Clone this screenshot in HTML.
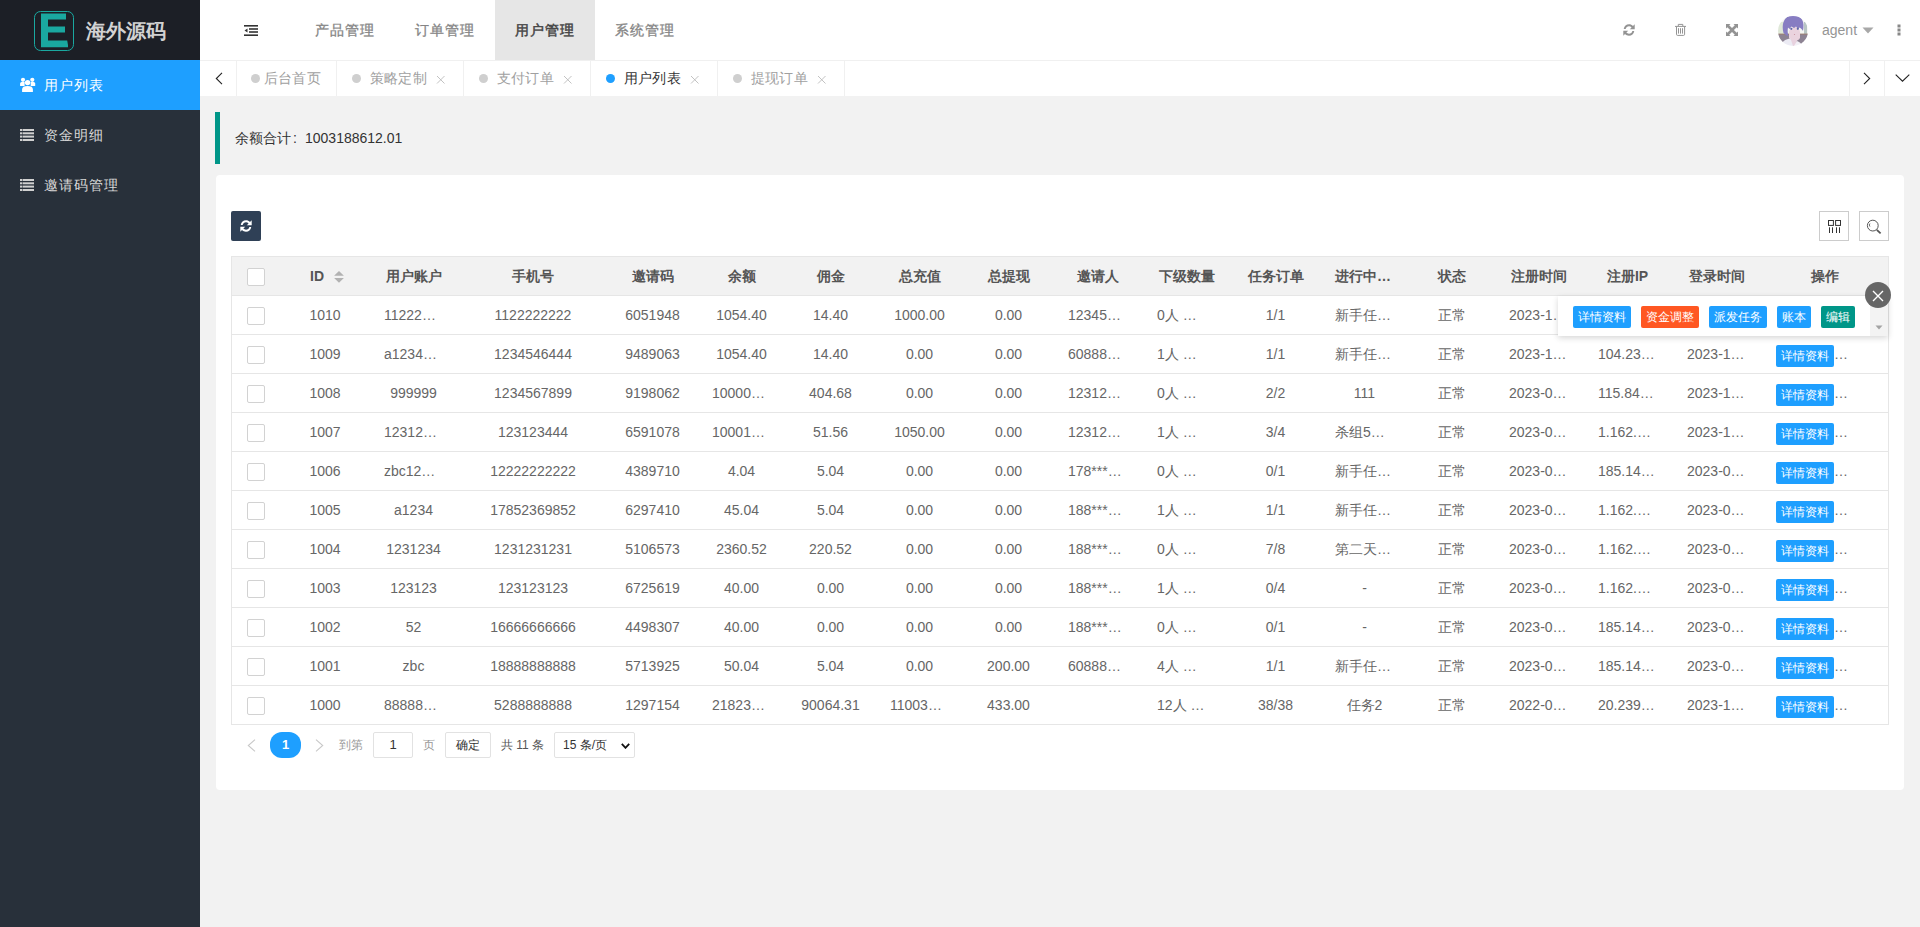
<!DOCTYPE html>
<html><head><meta charset="utf-8">
<style>
*{margin:0;padding:0;box-sizing:border-box}
html,body{width:1920px;height:927px;overflow:hidden;background:#f2f2f2;font-family:"Liberation Sans",sans-serif;font-size:14px;color:#666}
.abs{position:absolute}
#side{position:absolute;left:0;top:0;width:200px;height:927px;background:#28303a}
#logo{position:absolute;left:0;top:0;width:200px;height:60px;background:#1c1f26}
#logo .t{position:absolute;left:86px;top:18px;font-size:20px;font-weight:bold;color:#d2d2d2;line-height:26px;letter-spacing:0px}
.mi{position:absolute;left:0;width:200px;height:50px;line-height:50px;color:#d8d8d8;font-size:14px}
.mi .tx{position:absolute;left:44px;top:0;letter-spacing:1px}
.mi.on{background:#1e9fff;color:#fff}
#head{position:absolute;left:200px;top:0;width:1720px;height:60px;background:#fff}
.nav{position:absolute;top:0;height:60px;line-height:60px;width:100px;text-align:center;color:#858585;font-size:14px;letter-spacing:1px;-webkit-text-stroke:0.3px #858585}
.nav.on{background:#e6e6e6;color:#444;-webkit-text-stroke:0.45px #444}
#tabs{position:absolute;left:200px;top:60px;width:1720px;height:36px;background:#fff;border-top:1px solid #f0f0f0}
.tab{position:absolute;top:0;height:35px;line-height:34px;border-right:1px solid #f0f0f0;color:#a0a0a0;font-size:14px;letter-spacing:0.2px}
.tab .dot{position:absolute;top:13px;width:9px;height:9px;border-radius:50%;background:#cfcfcf}
.tab .x{position:absolute;top:0;font-size:14px;color:#b0b0b0}
#notice{position:absolute;left:215px;top:112px;width:1689px;height:52px;border-left:5px solid #009688;background:#f2f2f2}
#card{position:absolute;left:216px;top:175px;width:1688px;height:615px;background:#fff;border-radius:4px}
#tbl{position:absolute;left:231px;top:256px;width:1658px;height:469px;border:1px solid #e6e6e6;border-bottom:0}
.hrow{position:absolute;left:0;top:0;width:1656px;height:39px;background:#f2f2f2;border-bottom:1px solid #e6e6e6}
.rline{position:absolute;left:0;width:1656px;height:1px;background:#e6e6e6}
.c{position:absolute;height:38px;line-height:38px;padding:0 15px;text-align:center;white-space:nowrap;overflow:hidden;color:#666}
.c.l{text-align:left}
.c.h{color:#555;font-weight:bold}
.cb{position:absolute;width:18px;height:18px;border:1px solid #d2d2d2;border-radius:2px;background:#fff}
.btn{display:inline-block;vertical-align:top;margin-top:10px;height:22px;line-height:22px;padding:0 5px;font-size:12px;color:#fff;background:#1e9fff;border-radius:2px}
.ell{color:#666}
.tb{position:absolute;top:10px;width:58px;height:22px;line-height:22px;text-align:center;font-size:12px;color:#fff;background:#1e9fff;border-radius:2px}
</style></head><body>
<div id="side">
  <div id="logo">
    <svg class="abs" style="left:34px;top:11px" width="40" height="40" viewBox="0 0 40 40">
      <rect x="0.5" y="0.5" width="39" height="39" rx="6" fill="none" stroke="#1aa8a0" stroke-width="1"/>
      <path d="M7 2.5H32V8.5H14V15.5H31V21.5H14V29.5H33.2L34 34V36.2H7Z" fill="#1aa8a0"/>
    </svg>
    <div class="t">海外源码</div>
  </div>
  <div class="mi on" style="top:60px">
    <svg class="abs" style="left:20px;top:17px" width="16" height="16" viewBox="0 0 16 16"><g fill="#fff"><circle cx="3" cy="2.8" r="2.1"/><circle cx="12.3" cy="2.8" r="2.1"/><circle cx="7.6" cy="5.6" r="2.7"/><path d="M0.1 8.9V6.6Q0.1 5.1 1.6 5.1H4.6V8.9Z"/><path d="M15.2 8.9V6.6Q15.2 5.1 13.7 5.1H10.7V8.9Z"/><path d="M2.1 15V12.5Q2.1 9.1 7.5 9.1Q12.9 9.1 12.9 12.5V15Z"/></g></svg>
    <span class="tx">用户列表</span></div>
  <div class="mi" style="top:110px">
    <svg class="abs" style="left:20px;top:19px" width="14" height="12" viewBox="0 0 14 12"><g fill="#d0d0d0"><rect x="0" y="0" width="2" height="2"/><rect x="2.5" y="0" width="11.5" height="2"/><rect x="0" y="3.3" width="2" height="2"/><rect x="2.5" y="3.3" width="11.5" height="2"/><rect x="0" y="6.6" width="2" height="2"/><rect x="2.5" y="6.6" width="11.5" height="2"/><rect x="0" y="10" width="2" height="2"/><rect x="2.5" y="10" width="11.5" height="2"/></g></svg>
    <span class="tx">资金明细</span></div>
  <div class="mi" style="top:160px">
    <svg class="abs" style="left:20px;top:19px" width="14" height="12" viewBox="0 0 14 12"><g fill="#d0d0d0"><rect x="0" y="0" width="2" height="2"/><rect x="2.5" y="0" width="11.5" height="2"/><rect x="0" y="3.3" width="2" height="2"/><rect x="2.5" y="3.3" width="11.5" height="2"/><rect x="0" y="6.6" width="2" height="2"/><rect x="2.5" y="6.6" width="11.5" height="2"/><rect x="0" y="10" width="2" height="2"/><rect x="2.5" y="10" width="11.5" height="2"/></g></svg>
    <span class="tx">邀请码管理</span></div>
</div>

<div id="head">
  <svg class="abs" style="left:44px;top:25px" width="14" height="11" viewBox="0 0 14 11"><g fill="#333"><rect x="0" y="0" width="14" height="1.6"/><rect x="5" y="3.2" width="9" height="1.6"/><rect x="5" y="6.2" width="9" height="1.6"/><rect x="0" y="9.4" width="14" height="1.6"/><path d="M0.5 5.5L3.5 3.5V7.5Z"/></g></svg>
  <div class="nav" style="left:95px">产品管理</div>
  <div class="nav" style="left:195px">订单管理</div>
  <div class="nav on" style="left:295px">用户管理</div>
  <div class="nav" style="left:395px">系统管理</div>
  <svg class="abs" style="left:1422px;top:23px" width="14" height="14" viewBox="0 0 13 13"><g fill="#939393"><path d="M1.6 5.6C2 3 4 1.2 6.5 1.2C8 1.2 9.3 1.8 10.2 2.8L11.8 1.2V5.8H7.2L8.9 4.1C8.3 3.4 7.4 3 6.5 3C5 3 3.7 4 3.4 5.6Z"/><path d="M11.4 7.4C11 10 9 11.8 6.5 11.8C5 11.8 3.7 11.2 2.8 10.2L1.2 11.8V7.2H5.8L4.1 8.9C4.7 9.6 5.6 10 6.5 10C8 10 9.3 9 9.6 7.4Z"/></g></svg>
  <svg class="abs" style="left:1470px;top:18px" width="22" height="22" viewBox="0 0 22 22"><g fill="none" stroke="#949494" stroke-width="1"><path d="M5 8.4H16"/><path d="M8.3 8.2V6.4H12.8V8.2"/><path d="M6.5 8.6V16.3Q6.5 17.4 7.6 17.4H13.5Q14.6 17.4 14.6 16.3V8.6"/><path d="M8.5 10.2V15.6M10.5 10.2V15.6M12.5 10.2V15.6"/></g></svg>
  <svg class="abs" style="left:1526px;top:24px" width="12" height="12" viewBox="0 0 12 12"><g fill="#939393"><path d="M0 0H4.5L3.2 1.3L6 4.1L8.8 1.3L7.5 0H12V4.5L10.7 3.2L7.9 6L10.7 8.8L12 7.5V12H7.5L8.8 10.7L6 7.9L3.2 10.7L4.5 12H0V7.5L1.3 8.8L4.1 6L1.3 3.2L0 4.5Z"/></g></svg>
  <svg class="abs" style="left:1578px;top:16px" width="30" height="30" viewBox="0 0 30 30"><defs><clipPath id="av"><circle cx="15" cy="15" r="15"/></clipPath><filter id="bl"><feGaussianBlur stdDeviation="0.5"/></filter></defs><g clip-path="url(#av)"><g filter="url(#bl)"><rect width="30" height="30" fill="#f4f6f2"/><rect x="0" y="6" width="8" height="12" fill="#dfe8d8"/><rect x="26" y="6" width="3" height="14" fill="#b9c6c4"/><rect y="18" width="30" height="12" fill="#8d8393"/><rect y="17.6" width="30" height="1" fill="#9c7f72"/><path d="M11 17C11 13 13 11 16.5 11S22 13 22 17V22C21 24 19 25 16.5 25C14 25 12 23.5 11 22Z" fill="#ead3de"/><path d="M13 24H19L18.5 30H13Z" fill="#e8d2df"/><path d="M3 30C4 25 8 23 12.5 22.5L15 30Z" fill="#ecebf4"/><path d="M16 30L19 25C22 26 24 28 24 30Z" fill="#f2f0f6"/><path d="M5.5 17C3.5 9 5 0 15 -1C24 -1 27 6 25 15C24 13 22.5 12 21.5 11.5L20 13L18 10.5L16 12L13.5 10.5L11.5 13L10 11.5C9.5 14 9.5 17 10.5 20C8.5 19.5 7 18.5 5.5 17Z" fill="#877dc2"/><circle cx="13.3" cy="12.8" r="1.1" fill="#5f6aa8"/><circle cx="19.8" cy="12.8" r="1.1" fill="#5f6aa8"/><circle cx="16.5" cy="18.5" r="0.6" fill="#c9909c"/></g></g></svg>
  <span class="abs" style="left:1622px;top:21px;color:#959595;font-size:14px;line-height:18px">agent</span>
  <svg class="abs" style="left:1662px;top:27px" width="12" height="7" viewBox="0 0 12 7"><path d="M0.5 0.5H11.5L6 6.5Z" fill="#a8a8a8"/></svg>
  <svg class="abs" style="left:1697px;top:24px" width="4" height="12" viewBox="0 0 4 12"><g fill="#888"><rect x="0.5" y="0.5" width="3" height="3"/><rect x="0.5" y="4.5" width="3" height="3"/><rect x="0.5" y="8.5" width="3" height="3"/></g></svg>
</div>

<div id="tabs">
  <div class="tab" style="left:0;width:37px"><svg class="abs" style="left:14.5px;top:10.8px" width="8" height="13" viewBox="0 0 8 13"><path d="M7 0.9L1.3 6.5L7 12.1" fill="none" stroke="#222" stroke-width="1.1"/></svg></div>
  <div class="tab" style="left:37px;width:100px"><span class="dot" style="left:14px"></span><span class="abs" style="left:27px">后台首页</span></div>
  <div class="tab" style="left:137px;width:127px"><span class="dot" style="left:15px"></span><span class="abs" style="left:33px">策略定制</span><span class="x" style="left:99px"><svg width="9" height="9" viewBox="0 0 9 9" style="position:absolute;top:14px;left:0"><path d="M1 1L8.5 8.5M8.5 1L1 8.5" stroke="#bbb" stroke-width="0.9"/></svg></span></div>
  <div class="tab" style="left:264px;width:127px"><span class="dot" style="left:15px"></span><span class="abs" style="left:33px">支付订单</span><span class="x" style="left:99px"><svg width="9" height="9" viewBox="0 0 9 9" style="position:absolute;top:14px;left:0"><path d="M1 1L8.5 8.5M8.5 1L1 8.5" stroke="#bbb" stroke-width="0.9"/></svg></span></div>
  <div class="tab" style="left:391px;width:127px"><span class="dot" style="left:15px;background:#1e9fff"></span><span class="abs" style="left:33px;color:#333">用户列表</span><span class="x" style="left:99px"><svg width="9" height="9" viewBox="0 0 9 9" style="position:absolute;top:14px;left:0"><path d="M1 1L8.5 8.5M8.5 1L1 8.5" stroke="#bbb" stroke-width="0.9"/></svg></span></div>
  <div class="tab" style="left:518px;width:127px"><span class="dot" style="left:15px"></span><span class="abs" style="left:33px">提现订单</span><span class="x" style="left:99px"><svg width="9" height="9" viewBox="0 0 9 9" style="position:absolute;top:14px;left:0"><path d="M1 1L8.5 8.5M8.5 1L1 8.5" stroke="#bbb" stroke-width="0.9"/></svg></span></div>
  <div class="tab" style="left:1649px;width:36px;border-left:1px solid #f0f0f0"><svg class="abs" style="left:13px;top:11px" width="8" height="13" viewBox="0 0 8 13"><path d="M1 0.9L6.7 6.5L1 12.1" fill="none" stroke="#222" stroke-width="1.1"/></svg></div>
  <div class="tab" style="left:1685px;width:35px;border-right:0"><svg class="abs" style="left:10px;top:12.8px" width="15" height="8" viewBox="0 0 15 8"><path d="M0.7 0.7L7.5 7.2L14.3 0.7" fill="none" stroke="#222" stroke-width="1.1"/></svg></div>
</div>
<div id="notice"><span class="abs" style="left:15px;top:17px;color:#333;font-size:14px;line-height:18px">余额合计<span style="display:inline-block;width:14px;padding-left:2px">:</span>1003188612.01</span></div>
<div id="card"></div>
<div class="abs" style="left:231px;top:211px;width:30px;height:30px;background:#2f4056;border-radius:2px"><svg class="abs" style="left:8px;top:8px" width="14" height="14" viewBox="0 0 13 13"><g fill="#fff"><path d="M1.6 5.6C2 3 4 1.2 6.5 1.2C8 1.2 9.3 1.8 10.2 2.8L11.8 1.2V5.8H7.2L8.9 4.1C8.3 3.4 7.4 3 6.5 3C5 3 3.7 4 3.4 5.6Z"/><path d="M11.4 7.4C11 10 9 11.8 6.5 11.8C5 11.8 3.7 11.2 2.8 10.2L1.2 11.8V7.2H5.8L4.1 8.9C4.7 9.6 5.6 10 6.5 10C8 10 9.3 9 9.6 7.4Z"/></g></svg></div>
<div class="abs" style="left:1819px;top:211px;width:30px;height:30px;border:1px solid #ccc"></div>
<div class="abs" style="left:1859px;top:211px;width:30px;height:30px;border:1px solid #ccc"></div>
<div id="tbl">
<div class="hrow"></div>
<span class="cb" style="left:15px;top:11px"></span>
<span class="c h" style="left:49px;top:0;width:88px;text-align:left;padding-left:29px">ID<svg style="position:absolute;left:53px;top:13px" width="10" height="13" viewBox="0 0 10 13"><path d="M5 1L9.9 5.8H0.1Z M5 12.8L9.9 8.1H0.1Z" fill="#b2b2b2"/></svg></span>
<span class="c h" style="left:137px;top:0px;width:89px">用户账户</span>
<span class="c h" style="left:226px;top:0px;width:150px">手机号</span>
<span class="c h" style="left:376px;top:0px;width:89px">邀请码</span>
<span class="c h" style="left:465px;top:0px;width:89px">余额</span>
<span class="c h" style="left:554px;top:0px;width:89px">佣金</span>
<span class="c h" style="left:643px;top:0px;width:89px">总充值</span>
<span class="c h" style="left:732px;top:0px;width:89px">总提现</span>
<span class="c h" style="left:821px;top:0px;width:89px">邀请人</span>
<span class="c h" style="left:910px;top:0px;width:89px">下级数量</span>
<span class="c h" style="left:999px;top:0px;width:89px">任务订单</span>
<span class="c h l" style="left:1088px;top:0px;width:89px">进行中…</span>
<span class="c h" style="left:1177px;top:0px;width:85px">状态</span>
<span class="c h" style="left:1262px;top:0px;width:89px">注册时间</span>
<span class="c h" style="left:1351px;top:0px;width:89px">注册IP</span>
<span class="c h" style="left:1440px;top:0px;width:89px">登录时间</span>
<span class="c h" style="left:1529px;top:0px;width:128px">操作</span>
<div class="rline" style="top:77px"></div>
<span class="cb" style="left:15px;top:50px"></span>
<span class="c" style="left:49px;top:39px;width:88px">1010</span>
<span class="c l" style="left:137px;top:39px;width:89px">11222…</span>
<span class="c" style="left:226px;top:39px;width:150px">1122222222</span>
<span class="c" style="left:376px;top:39px;width:89px">6051948</span>
<span class="c" style="left:465px;top:39px;width:89px">1054.40</span>
<span class="c" style="left:554px;top:39px;width:89px">14.40</span>
<span class="c" style="left:643px;top:39px;width:89px">1000.00</span>
<span class="c" style="left:732px;top:39px;width:89px">0.00</span>
<span class="c l" style="left:821px;top:39px;width:89px">12345…</span>
<span class="c l" style="left:910px;top:39px;width:89px">0人 …</span>
<span class="c" style="left:999px;top:39px;width:89px">1/1</span>
<span class="c l" style="left:1088px;top:39px;width:89px">新手任…</span>
<span class="c" style="left:1177px;top:39px;width:85px">正常</span>
<span class="c l" style="left:1262px;top:39px;width:89px">2023-1…</span>
<div class="rline" style="top:116px"></div>
<span class="cb" style="left:15px;top:89px"></span>
<span class="c" style="left:49px;top:78px;width:88px">1009</span>
<span class="c l" style="left:137px;top:78px;width:89px">a1234…</span>
<span class="c" style="left:226px;top:78px;width:150px">1234546444</span>
<span class="c" style="left:376px;top:78px;width:89px">9489063</span>
<span class="c" style="left:465px;top:78px;width:89px">1054.40</span>
<span class="c" style="left:554px;top:78px;width:89px">14.40</span>
<span class="c" style="left:643px;top:78px;width:89px">0.00</span>
<span class="c" style="left:732px;top:78px;width:89px">0.00</span>
<span class="c l" style="left:821px;top:78px;width:89px">60888…</span>
<span class="c l" style="left:910px;top:78px;width:89px">1人 …</span>
<span class="c" style="left:999px;top:78px;width:89px">1/1</span>
<span class="c l" style="left:1088px;top:78px;width:89px">新手任…</span>
<span class="c" style="left:1177px;top:78px;width:85px">正常</span>
<span class="c l" style="left:1262px;top:78px;width:89px">2023-1…</span>
<span class="c l" style="left:1351px;top:78px;width:89px">104.23…</span>
<span class="c l" style="left:1440px;top:78px;width:89px">2023-1…</span>
<span class="c l" style="left:1529px;top:78px;width:128px"><span class="btn">详情资料</span><span class="ell">…</span></span>
<div class="rline" style="top:155px"></div>
<span class="cb" style="left:15px;top:128px"></span>
<span class="c" style="left:49px;top:117px;width:88px">1008</span>
<span class="c" style="left:137px;top:117px;width:89px">999999</span>
<span class="c" style="left:226px;top:117px;width:150px">1234567899</span>
<span class="c" style="left:376px;top:117px;width:89px">9198062</span>
<span class="c l" style="left:465px;top:117px;width:89px">10000…</span>
<span class="c" style="left:554px;top:117px;width:89px">404.68</span>
<span class="c" style="left:643px;top:117px;width:89px">0.00</span>
<span class="c" style="left:732px;top:117px;width:89px">0.00</span>
<span class="c l" style="left:821px;top:117px;width:89px">12312…</span>
<span class="c l" style="left:910px;top:117px;width:89px">0人 …</span>
<span class="c" style="left:999px;top:117px;width:89px">2/2</span>
<span class="c" style="left:1088px;top:117px;width:89px">111</span>
<span class="c" style="left:1177px;top:117px;width:85px">正常</span>
<span class="c l" style="left:1262px;top:117px;width:89px">2023-0…</span>
<span class="c l" style="left:1351px;top:117px;width:89px">115.84…</span>
<span class="c l" style="left:1440px;top:117px;width:89px">2023-1…</span>
<span class="c l" style="left:1529px;top:117px;width:128px"><span class="btn">详情资料</span><span class="ell">…</span></span>
<div class="rline" style="top:194px"></div>
<span class="cb" style="left:15px;top:167px"></span>
<span class="c" style="left:49px;top:156px;width:88px">1007</span>
<span class="c l" style="left:137px;top:156px;width:89px">12312…</span>
<span class="c" style="left:226px;top:156px;width:150px">123123444</span>
<span class="c" style="left:376px;top:156px;width:89px">6591078</span>
<span class="c l" style="left:465px;top:156px;width:89px">10001…</span>
<span class="c" style="left:554px;top:156px;width:89px">51.56</span>
<span class="c" style="left:643px;top:156px;width:89px">1050.00</span>
<span class="c" style="left:732px;top:156px;width:89px">0.00</span>
<span class="c l" style="left:821px;top:156px;width:89px">12312…</span>
<span class="c l" style="left:910px;top:156px;width:89px">1人 …</span>
<span class="c" style="left:999px;top:156px;width:89px">3/4</span>
<span class="c l" style="left:1088px;top:156px;width:89px">杀组5…</span>
<span class="c" style="left:1177px;top:156px;width:85px">正常</span>
<span class="c l" style="left:1262px;top:156px;width:89px">2023-0…</span>
<span class="c l" style="left:1351px;top:156px;width:89px">1.162.…</span>
<span class="c l" style="left:1440px;top:156px;width:89px">2023-1…</span>
<span class="c l" style="left:1529px;top:156px;width:128px"><span class="btn">详情资料</span><span class="ell">…</span></span>
<div class="rline" style="top:233px"></div>
<span class="cb" style="left:15px;top:206px"></span>
<span class="c" style="left:49px;top:195px;width:88px">1006</span>
<span class="c l" style="left:137px;top:195px;width:89px">zbc12…</span>
<span class="c" style="left:226px;top:195px;width:150px">12222222222</span>
<span class="c" style="left:376px;top:195px;width:89px">4389710</span>
<span class="c" style="left:465px;top:195px;width:89px">4.04</span>
<span class="c" style="left:554px;top:195px;width:89px">5.04</span>
<span class="c" style="left:643px;top:195px;width:89px">0.00</span>
<span class="c" style="left:732px;top:195px;width:89px">0.00</span>
<span class="c l" style="left:821px;top:195px;width:89px">178***…</span>
<span class="c l" style="left:910px;top:195px;width:89px">0人 …</span>
<span class="c" style="left:999px;top:195px;width:89px">0/1</span>
<span class="c l" style="left:1088px;top:195px;width:89px">新手任…</span>
<span class="c" style="left:1177px;top:195px;width:85px">正常</span>
<span class="c l" style="left:1262px;top:195px;width:89px">2023-0…</span>
<span class="c l" style="left:1351px;top:195px;width:89px">185.14…</span>
<span class="c l" style="left:1440px;top:195px;width:89px">2023-0…</span>
<span class="c l" style="left:1529px;top:195px;width:128px"><span class="btn">详情资料</span><span class="ell">…</span></span>
<div class="rline" style="top:272px"></div>
<span class="cb" style="left:15px;top:245px"></span>
<span class="c" style="left:49px;top:234px;width:88px">1005</span>
<span class="c" style="left:137px;top:234px;width:89px">a1234</span>
<span class="c" style="left:226px;top:234px;width:150px">17852369852</span>
<span class="c" style="left:376px;top:234px;width:89px">6297410</span>
<span class="c" style="left:465px;top:234px;width:89px">45.04</span>
<span class="c" style="left:554px;top:234px;width:89px">5.04</span>
<span class="c" style="left:643px;top:234px;width:89px">0.00</span>
<span class="c" style="left:732px;top:234px;width:89px">0.00</span>
<span class="c l" style="left:821px;top:234px;width:89px">188***…</span>
<span class="c l" style="left:910px;top:234px;width:89px">1人 …</span>
<span class="c" style="left:999px;top:234px;width:89px">1/1</span>
<span class="c l" style="left:1088px;top:234px;width:89px">新手任…</span>
<span class="c" style="left:1177px;top:234px;width:85px">正常</span>
<span class="c l" style="left:1262px;top:234px;width:89px">2023-0…</span>
<span class="c l" style="left:1351px;top:234px;width:89px">1.162.…</span>
<span class="c l" style="left:1440px;top:234px;width:89px">2023-0…</span>
<span class="c l" style="left:1529px;top:234px;width:128px"><span class="btn">详情资料</span><span class="ell">…</span></span>
<div class="rline" style="top:311px"></div>
<span class="cb" style="left:15px;top:284px"></span>
<span class="c" style="left:49px;top:273px;width:88px">1004</span>
<span class="c" style="left:137px;top:273px;width:89px">1231234</span>
<span class="c" style="left:226px;top:273px;width:150px">1231231231</span>
<span class="c" style="left:376px;top:273px;width:89px">5106573</span>
<span class="c" style="left:465px;top:273px;width:89px">2360.52</span>
<span class="c" style="left:554px;top:273px;width:89px">220.52</span>
<span class="c" style="left:643px;top:273px;width:89px">0.00</span>
<span class="c" style="left:732px;top:273px;width:89px">0.00</span>
<span class="c l" style="left:821px;top:273px;width:89px">188***…</span>
<span class="c l" style="left:910px;top:273px;width:89px">0人 …</span>
<span class="c" style="left:999px;top:273px;width:89px">7/8</span>
<span class="c l" style="left:1088px;top:273px;width:89px">第二天…</span>
<span class="c" style="left:1177px;top:273px;width:85px">正常</span>
<span class="c l" style="left:1262px;top:273px;width:89px">2023-0…</span>
<span class="c l" style="left:1351px;top:273px;width:89px">1.162.…</span>
<span class="c l" style="left:1440px;top:273px;width:89px">2023-0…</span>
<span class="c l" style="left:1529px;top:273px;width:128px"><span class="btn">详情资料</span><span class="ell">…</span></span>
<div class="rline" style="top:350px"></div>
<span class="cb" style="left:15px;top:323px"></span>
<span class="c" style="left:49px;top:312px;width:88px">1003</span>
<span class="c" style="left:137px;top:312px;width:89px">123123</span>
<span class="c" style="left:226px;top:312px;width:150px">123123123</span>
<span class="c" style="left:376px;top:312px;width:89px">6725619</span>
<span class="c" style="left:465px;top:312px;width:89px">40.00</span>
<span class="c" style="left:554px;top:312px;width:89px">0.00</span>
<span class="c" style="left:643px;top:312px;width:89px">0.00</span>
<span class="c" style="left:732px;top:312px;width:89px">0.00</span>
<span class="c l" style="left:821px;top:312px;width:89px">188***…</span>
<span class="c l" style="left:910px;top:312px;width:89px">1人 …</span>
<span class="c" style="left:999px;top:312px;width:89px">0/4</span>
<span class="c" style="left:1088px;top:312px;width:89px">-</span>
<span class="c" style="left:1177px;top:312px;width:85px">正常</span>
<span class="c l" style="left:1262px;top:312px;width:89px">2023-0…</span>
<span class="c l" style="left:1351px;top:312px;width:89px">1.162.…</span>
<span class="c l" style="left:1440px;top:312px;width:89px">2023-0…</span>
<span class="c l" style="left:1529px;top:312px;width:128px"><span class="btn">详情资料</span><span class="ell">…</span></span>
<div class="rline" style="top:389px"></div>
<span class="cb" style="left:15px;top:362px"></span>
<span class="c" style="left:49px;top:351px;width:88px">1002</span>
<span class="c" style="left:137px;top:351px;width:89px">52</span>
<span class="c" style="left:226px;top:351px;width:150px">16666666666</span>
<span class="c" style="left:376px;top:351px;width:89px">4498307</span>
<span class="c" style="left:465px;top:351px;width:89px">40.00</span>
<span class="c" style="left:554px;top:351px;width:89px">0.00</span>
<span class="c" style="left:643px;top:351px;width:89px">0.00</span>
<span class="c" style="left:732px;top:351px;width:89px">0.00</span>
<span class="c l" style="left:821px;top:351px;width:89px">188***…</span>
<span class="c l" style="left:910px;top:351px;width:89px">0人 …</span>
<span class="c" style="left:999px;top:351px;width:89px">0/1</span>
<span class="c" style="left:1088px;top:351px;width:89px">-</span>
<span class="c" style="left:1177px;top:351px;width:85px">正常</span>
<span class="c l" style="left:1262px;top:351px;width:89px">2023-0…</span>
<span class="c l" style="left:1351px;top:351px;width:89px">185.14…</span>
<span class="c l" style="left:1440px;top:351px;width:89px">2023-0…</span>
<span class="c l" style="left:1529px;top:351px;width:128px"><span class="btn">详情资料</span><span class="ell">…</span></span>
<div class="rline" style="top:428px"></div>
<span class="cb" style="left:15px;top:401px"></span>
<span class="c" style="left:49px;top:390px;width:88px">1001</span>
<span class="c" style="left:137px;top:390px;width:89px">zbc</span>
<span class="c" style="left:226px;top:390px;width:150px">18888888888</span>
<span class="c" style="left:376px;top:390px;width:89px">5713925</span>
<span class="c" style="left:465px;top:390px;width:89px">50.04</span>
<span class="c" style="left:554px;top:390px;width:89px">5.04</span>
<span class="c" style="left:643px;top:390px;width:89px">0.00</span>
<span class="c" style="left:732px;top:390px;width:89px">200.00</span>
<span class="c l" style="left:821px;top:390px;width:89px">60888…</span>
<span class="c l" style="left:910px;top:390px;width:89px">4人 …</span>
<span class="c" style="left:999px;top:390px;width:89px">1/1</span>
<span class="c l" style="left:1088px;top:390px;width:89px">新手任…</span>
<span class="c" style="left:1177px;top:390px;width:85px">正常</span>
<span class="c l" style="left:1262px;top:390px;width:89px">2023-0…</span>
<span class="c l" style="left:1351px;top:390px;width:89px">185.14…</span>
<span class="c l" style="left:1440px;top:390px;width:89px">2023-0…</span>
<span class="c l" style="left:1529px;top:390px;width:128px"><span class="btn">详情资料</span><span class="ell">…</span></span>
<div class="rline" style="top:467px"></div>
<span class="cb" style="left:15px;top:440px"></span>
<span class="c" style="left:49px;top:429px;width:88px">1000</span>
<span class="c l" style="left:137px;top:429px;width:89px">88888…</span>
<span class="c" style="left:226px;top:429px;width:150px">5288888888</span>
<span class="c" style="left:376px;top:429px;width:89px">1297154</span>
<span class="c l" style="left:465px;top:429px;width:89px">21823…</span>
<span class="c" style="left:554px;top:429px;width:89px">90064.31</span>
<span class="c l" style="left:643px;top:429px;width:89px">11003…</span>
<span class="c" style="left:732px;top:429px;width:89px">433.00</span>
<span class="c l" style="left:910px;top:429px;width:89px">12人 …</span>
<span class="c" style="left:999px;top:429px;width:89px">38/38</span>
<span class="c" style="left:1088px;top:429px;width:89px">任务2</span>
<span class="c" style="left:1177px;top:429px;width:85px">正常</span>
<span class="c l" style="left:1262px;top:429px;width:89px">2022-0…</span>
<span class="c l" style="left:1351px;top:429px;width:89px">20.239…</span>
<span class="c l" style="left:1440px;top:429px;width:89px">2023-1…</span>
<span class="c l" style="left:1529px;top:429px;width:128px"><span class="btn">详情资料</span><span class="ell">…</span></span>
</div>
<!--/tbl-->
<svg class="abs" style="left:1828px;top:220px" width="14" height="14" viewBox="0 0 14 14"><g fill="none" stroke="#333" stroke-width="1"><rect x="0.5" y="0.5" width="4.9" height="4.9"/><rect x="7.6" y="0.5" width="4.9" height="4.9"/><path d="M1.5 7.3V13M4.5 7.3V13M8.5 7.3V13M11.5 7.3V13"/></g></svg>
<svg class="abs" style="left:1866px;top:219px" width="16" height="16" viewBox="0 0 16 16"><g fill="none" stroke="#444" stroke-width="0.9"><circle cx="6.8" cy="6.6" r="5.4"/><path d="M3.9 4.6C3.3 5.4 3.3 6.6 3.9 7.5"/><path d="M10.8 10.8L14.6 14.4" stroke-width="1.8" stroke="#555"/></g></svg>
<div id="pager">
 <svg class="abs" style="left:247px;top:739px" width="9" height="13" viewBox="0 0 9 13"><path d="M8 0.7L1.3 6.5L8 12.3" fill="none" stroke="#c8c8c8" stroke-width="1.1"/></svg>
 <div class="abs" style="left:270px;top:732px;width:31px;height:26px;border-radius:12px;background:#1e9fff;color:#fff;font-size:13px;font-weight:bold;line-height:26px;text-align:center">1</div>
 <svg class="abs" style="left:315px;top:739px" width="9" height="13" viewBox="0 0 9 13"><path d="M1 0.7L7.7 6.5L1 12.3" fill="none" stroke="#c8c8c8" stroke-width="1.1"/></svg>
 <span class="abs" style="left:339px;top:736.5px;font-size:12px;line-height:16px;color:#999">到第</span>
 <div class="abs" style="left:373px;top:732px;width:40px;height:26px;border:1px solid #e2e2e2;border-radius:2px;color:#333;font-size:13px;line-height:24px;text-align:center">1</div>
 <span class="abs" style="left:423px;top:737px;font-size:12px;line-height:16px;color:#999">页</span>
 <div class="abs" style="left:445px;top:732px;width:46px;height:26px;border:1px solid #e2e2e2;border-radius:2px;color:#333;font-size:12px;line-height:24px;text-align:center">确定</div>
 <span class="abs" style="left:501px;top:737px;font-size:12px;line-height:16px;color:#555">共 11 条</span>
 <div class="abs" style="left:554px;top:732px;width:81px;height:26px;border:1px solid #e2e2e2;border-radius:2px;color:#333;font-size:12px;line-height:24px;padding-left:8px">15 条/页<svg class="abs" style="left:66px;top:9.5px" width="9" height="6" viewBox="0 0 9 6"><path d="M0.8 0.8L4.5 4.8L8.2 0.8" fill="none" stroke="#111" stroke-width="1.8"/></svg></div>
</div>
<div id="tips" class="abs" style="left:1558px;top:296px;width:330px;height:40px;background:#fff;box-shadow:0 2px 6px rgba(0,0,0,.16)">
 <div class="abs" style="left:312px;top:0;width:18px;height:40px;background:#f3f3f3"></div>
 <svg class="abs" style="left:316.5px;top:28.8px" width="8" height="5" viewBox="0 0 8 5"><path d="M0.5 0.5H7.5L4 4.5Z" fill="#a3a3a3"/></svg>
 <span class="tb" style="left:15px">详情资料</span>
 <span class="tb" style="left:83px;background:#ff5722">资金调整</span>
 <span class="tb" style="left:151px">派发任务</span>
 <span class="tb" style="left:219px;width:34px">账本</span>
 <span class="tb" style="left:263px;width:34px;background:#009688">编辑</span>
</div>
<div class="abs" style="left:1865px;top:282px;width:26px;height:26px;border-radius:50%;background:#666"><svg class="abs" style="left:7px;top:7.7px" width="12" height="12" viewBox="0 0 12 12"><path d="M1 1L11 11M11 1L1 11" stroke="#fff" stroke-width="1.4"/></svg></div>
</body></html>
